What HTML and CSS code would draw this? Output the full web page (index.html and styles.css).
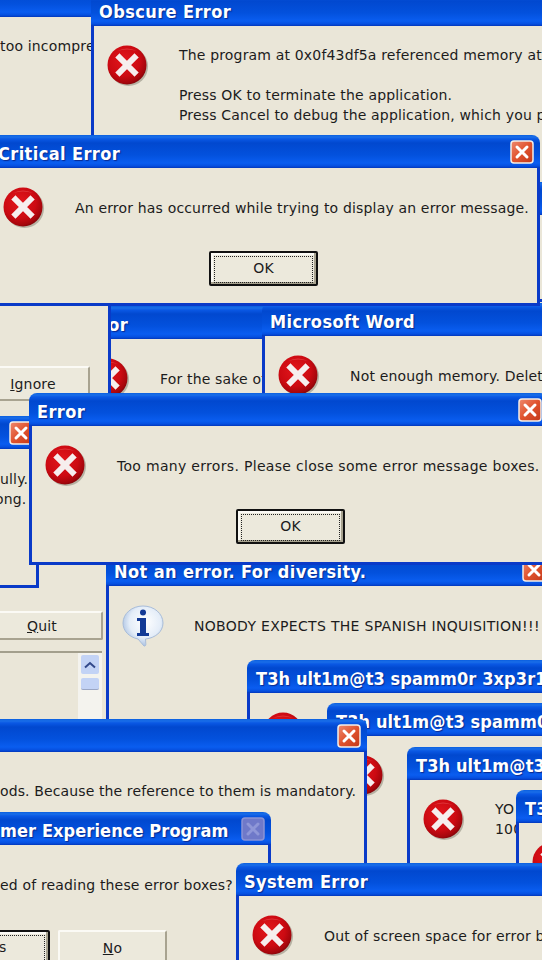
FILE: index.html
```html
<!DOCTYPE html>
<html lang="en">
<head>
    <meta charset="UTF-8">
    <meta name="viewport" content="width=device-width, initial-scale=1.0">
    <title>Too many errors</title>
    <link rel="stylesheet" href="styles.css">
</head>
<body>
    <svg class="sprites" aria-hidden="true">
        <defs>
            <radialGradient id="redBall" cx="42%" cy="38%" r="68%">
                <stop offset="0" stop-color="#e2161c"/>
                <stop offset="0.6" stop-color="#cc0a12"/>
                <stop offset="0.85" stop-color="#a5060c"/>
                <stop offset="1" stop-color="#6e0408"/>
            </radialGradient>
            <radialGradient id="infoBall" cx="55%" cy="40%" r="65%">
                <stop offset="0" stop-color="#ffffff"/>
                <stop offset="0.6" stop-color="#e4edf8"/>
                <stop offset="1" stop-color="#9db7dc"/>
            </radialGradient>
            <linearGradient id="closeRed" x1="0" y1="0" x2="1" y2="1">
                <stop offset="0" stop-color="#ee8a70"/>
                <stop offset="0.5" stop-color="#e0532e"/>
                <stop offset="1" stop-color="#c2381a"/>
            </linearGradient>
            <symbol id="icoError" viewBox="0 0 42 42">
                <circle cx="21.5" cy="21.5" r="19.5" fill="#8a8678" opacity="0.55"/>
                <circle cx="20" cy="20" r="19.5" fill="url(#redBall)"/>
                <path d="M10 6a18 14 0 0 1 20 0a24 16 0 0 0-20 0z" fill="#f0686a" opacity="0.45"/>
                <path d="M12.500 12.500l15 15M27.500 12.500l-15 15" stroke="#f6eeee" stroke-width="6" stroke-linecap="square" fill="none"/>
            </symbol>
            <symbol id="icoInfo" viewBox="0 0 42 42">
                <path d="M21 1C10 1 1 8.500 1 18c0 8 6 14 15 16l6 7c1.500 0.500 2-1 1.800-2.500l-0.300-4.500C33 33 41 27 41 18 41 8.500 32 1 21 1z" fill="url(#infoBall)" stroke="#a8bcd8" stroke-width="1"/>
                <circle cx="21" cy="7.500" r="3" fill="#123a96"/>
                <path d="M15 13h9v15h3v3H15v-3h3V16h-3z" fill="#123a96"/>
            </symbol>
            <symbol id="icoClose" viewBox="0 0 24 24">
                <rect x="1" y="1" width="22" height="22" rx="3" fill="url(#closeRed)" stroke="#f4efe9" stroke-width="1.500"/>
                <path d="M7 7l10 10M17 7L7 17" stroke="#fff" stroke-width="3" stroke-linecap="round" fill="none"/>
            </symbol>
            <symbol id="icoCloseOff" viewBox="0 0 24 24">
                <rect x="1" y="1" width="22" height="22" rx="3" fill="#6f79c9" stroke="#8b93d4" stroke-width="1.500"/>
                <path d="M7 7l10 10M17 7L7 17" stroke="#8f97d8" stroke-width="3" stroke-linecap="round" fill="none"/>
            </symbol>
        </defs>
    </svg>

    <div class="desktop">

        <div class="win win-topleft">
            <div class="titlebar"></div>
            <div class="body body-bare">
                <p class="msg">too incompre</p>
            </div>
        </div>

        <div class="win win-obscure">
            <div class="titlebar"><span class="caption">Obscure Error</span></div>
            <div class="body">
                <div class="row row-top">
                    <svg class="icon"><use href="#icoError"/></svg>
                    <div class="msg">
                        <p>The program at 0x0f43df5a referenced memory at</p>
                        <p>Press OK to terminate the application.<br>Press Cancel to debug the application, which you p</p>
                    </div>
                </div>
            </div>
        </div>

        <div class="win win-strip">
            <div class="titlebar"></div>
            <div class="body"></div>
        </div>

        <div class="win win-sake">
            <div class="titlebar"><span class="caption">Error</span></div>
            <div class="body">
                <div class="row">
                    <svg class="icon"><use href="#icoError"/></svg>
                    <p class="msg">For the sake of</p>
                </div>
            </div>
        </div>

        <div class="win win-word">
            <div class="titlebar"><span class="caption">Microsoft Word</span></div>
            <div class="body">
                <div class="row">
                    <svg class="icon"><use href="#icoError"/></svg>
                    <p class="msg">Not enough memory. Delet</p>
                </div>
            </div>
        </div>

        <div class="win win-ignore">
            <div class="titlebar"></div>
            <div class="body body-ignore">
                <button class="btn btn-ignore"><span><u>I</u>gnore</span></button>
            </div>
        </div>

        <div class="win win-critical">
            <div class="titlebar">
                <span class="caption">Critical Error</span>
                <svg class="close"><use href="#icoClose"/></svg>
            </div>
            <div class="body">
                <div class="row">
                    <svg class="icon"><use href="#icoError"/></svg>
                    <p class="msg">An error has occurred while trying to display an error message.</p>
                </div>
                <div class="buttons">
                    <button class="btn btn-focus"><span>OK</span></button>
                </div>
            </div>
        </div>

        <div class="win win-quit">
            <div class="titlebar"></div>
            <div class="body body-quit">
                <button class="btn btn-quit"><span><u>Q</u>uit</span></button>
                <div class="listbox">
                    <div class="scrollbar">
                        <div class="scroll-up">
                            <svg viewBox="0 0 12 8"><path d="M1 6.500L6 2l5 4.500" fill="none" stroke="#33498a" stroke-width="2"/></svg>
                        </div>
                        <div class="scroll-thumb"></div>
                    </div>
                </div>
            </div>
        </div>

        <div class="win win-fully">
            <div class="titlebar">
                <svg class="close"><use href="#icoClose"/></svg>
            </div>
            <div class="body body-bare body-fully">
                <p class="msg">ully.</p>
                <p class="msg msg-shift">ong.</p>
            </div>
        </div>

        <div class="win win-diversity">
            <div class="titlebar">
                <span class="caption">Not an error. For diversity.</span>
                <svg class="close"><use href="#icoClose"/></svg>
            </div>
            <div class="body">
                <div class="row">
                    <svg class="icon"><use href="#icoInfo"/></svg>
                    <p class="msg msg-caps">NOBODY EXPECTS THE SPANISH INQUISITION!!!</p>
                </div>
            </div>
        </div>

        <div class="win win-error">
            <div class="titlebar">
                <span class="caption">Error</span>
                <svg class="close"><use href="#icoClose"/></svg>
            </div>
            <div class="body">
                <div class="row">
                    <svg class="icon"><use href="#icoError"/></svg>
                    <p class="msg msg-caps">Too many errors. Please close some error message boxes.</p>
                </div>
                <div class="buttons">
                    <button class="btn btn-focus"><span>OK</span></button>
                </div>
            </div>
        </div>

        <div class="win win-spam win-spam1">
            <div class="titlebar"><span class="caption">T3h ult1m@t3 spamm0r 3xp3r1</span></div>
            <div class="body">
                <div class="row"><svg class="icon"><use href="#icoError"/></svg></div>
            </div>
        </div>

        <div class="win win-spam win-spam2">
            <div class="titlebar"><span class="caption">T3h ult1m@t3 spamm0</span></div>
            <div class="body">
                <div class="row"><svg class="icon"><use href="#icoError"/></svg></div>
            </div>
        </div>

        <div class="win win-spam win-spam3">
            <div class="titlebar"><span class="caption">T3h ult1m@t3</span></div>
            <div class="body">
                <div class="row row-top">
                    <svg class="icon"><use href="#icoError"/></svg>
                    <p class="msg">YO<br>100</p>
                </div>
            </div>
        </div>

        <div class="win win-spam win-spam4">
            <div class="titlebar"><span class="caption">T3</span></div>
            <div class="body">
                <div class="row"><svg class="icon"><use href="#icoError"/></svg></div>
            </div>
        </div>

        <div class="win win-mandatory">
            <div class="titlebar">
                <svg class="close"><use href="#icoClose"/></svg>
            </div>
            <div class="body body-bare body-mandatory">
                <p class="msg msg-tight">ods. Because the reference to them is mandatory.</p>
            </div>
        </div>

        <div class="win win-customer">
            <div class="titlebar">
                <span class="caption caption-tight">mer Experience Program</span>
                <svg class="close"><use href="#icoCloseOff"/></svg>
            </div>
            <div class="body body-bare body-customer">
                <p class="msg">ed of reading these error boxes?</p>
                <div class="buttons buttons-left">
                    <button class="btn btn-focus btn-yes"><span>Yes</span></button>
                    <button class="btn"><span><u>N</u>o</span></button>
                </div>
            </div>
        </div>

        <div class="win win-system">
            <div class="titlebar"><span class="caption">System Error</span></div>
            <div class="body">
                <div class="row">
                    <svg class="icon"><use href="#icoError"/></svg>
                    <p class="msg">Out of screen space for error b</p>
                </div>
            </div>
        </div>

    </div>
</body>
</html>
```

FILE: styles.css
```css
html, body {
    margin: 0;
    padding: 0;
}

body {
    font-family: "DejaVu Sans", sans-serif;
    font-size: 14px;
    line-height: 20px;
    letter-spacing: 0.17px;
    color: #1c1c1c;
    background: #eae6d8;
}

.sprites {
    position: absolute;
    width: 0;
    height: 0;
}

.desktop {
    position: relative;
    width: 542px;
    height: 960px;
    overflow: hidden;
    background: #eae6d8;
}

/* windows lie on a free canvas, so each has its own spot */
.win {
    position: absolute;
    display: flex;
    flex-direction: column;
    border-radius: 8px 8px 0 0;
    overflow: hidden;
}

.titlebar {
    flex: none;
    display: flex;
    align-items: center;
    height: 33px;
    padding: 0 6px 0 8px;
    background: linear-gradient(to bottom, #0a5fe0 0, #1a6ee8 2px, #0a58e4 4px, #0148cf 8px, #0351dd 20px, #0a5df0 28px, #0650e0 31px, #0337bb 33px);
}

.caption {
    font-family: "DejaVu Sans Condensed", "DejaVu Sans", sans-serif;
    font-weight: bold;
    font-size: 18px;
    letter-spacing: 0.4px;
    color: #fff;
    white-space: nowrap;
    padding-top: 4px;
    text-shadow: 1px 1px 1px #0a2a90;
}

.caption-tight,
.win-spam .caption {
    letter-spacing: 0.1px;
}

.win-spam .caption {
    margin-left: 1px;
}

.win-critical .caption {
    margin-left: 3px;
}

.close {
    flex: none;
    width: 24px;
    height: 24px;
    margin-left: auto;
}

.body {
    flex: 1;
    min-height: 0;
    padding: 19px 13px;
    background: #eae6d8;
    border: solid #0a3ac8;
    border-width: 0 3px 3px;
}

.body-bare {
    padding-left: 5px;
    padding-right: 0;
}

.row {
    display: flex;
    align-items: center;
    gap: 32px;
}

.row-top {
    align-items: flex-start;
}

.icon {
    flex: none;
    width: 42px;
    height: 42px;
    margin-right: -2px;
}

.msg {
    margin: 0;
    white-space: nowrap;
}

.msg p {
    margin: 0 0 20px;
}

.msg-tight {
    letter-spacing: 0.12px;
}

.msg-caps {
    letter-spacing: 0.31px;
}

.msg-shift {
    margin-left: -5px;
}

.buttons {
    display: flex;
    justify-content: center;
    margin-top: 22px;
}

.buttons-left {
    justify-content: flex-start;
    gap: 8px;
    margin-top: 35px;
}

.btn {
    flex: none;
    width: 109px;
    height: 35px;
    padding: 0;
    font: inherit;
    letter-spacing: inherit;
    color: inherit;
    background: #ece9dc;
    border: solid;
    border-width: 2px;
    border-color: #fbfaf5 #a8a390 #a8a390 #fbfaf5;
    border-radius: 2px;
}

.btn-focus {
    border-color: #111;
    box-shadow: inset -2px -2px 0 #a8a390, inset 2px 2px 0 #fbfaf5;
    padding: 3px;
}

.btn-focus span {
    display: block;
    height: 100%;
    line-height: 23px;
    border: 1px dotted #222;
}

/* windows, back to front */
.win-topleft {
    left: -20px;
    top: -16px;
    width: 150px;
    height: 160px;
}

.win-topleft .msg {
    margin-left: 12px;
}

.win-obscure {
    left: 91px;
    top: -7px;
    width: 600px;
    height: 193px;
}

.win-strip {
    left: 500px;
    top: 182px;
    width: 100px;
    height: 120px;
}

.win-critical {
    left: -13px;
    top: 135px;
    width: 553px;
    height: 171px;
}

.win-sake {
    left: 72px;
    top: 306px;
    width: 300px;
    height: 200px;
}

.win-word {
    left: 262px;
    top: 303px;
    width: 400px;
    height: 130px;
}

.win-ignore {
    left: -60px;
    top: 250px;
    width: 171px;
    height: 250px;
}

.body-ignore {
    padding-top: 83px;
    padding-right: 18px;
    display: flex;
    justify-content: flex-end;
    align-items: flex-start;
}

.btn-ignore {
    width: 114px;
}

.win-quit {
    left: -30px;
    top: 530px;
    width: 150px;
    height: 300px;
}

.body-quit {
    padding: 48px 14px 0 0;
    display: flex;
    flex-direction: column;
    align-items: flex-end;
}

.btn-quit {
    width: 122px;
    height: 29px;
}

.listbox {
    width: 133px;
    height: 100px;
    margin-top: 11px;
    margin-right: 1px;
    border-top: 2px solid #a39f8d;
    display: flex;
    justify-content: flex-end;
}

.scrollbar {
    width: 24px;
    padding: 2px 3px;
    box-sizing: border-box;
    background: #f4f3ee;
    display: flex;
    flex-direction: column;
    gap: 4px;
}

.scroll-up {
    height: 19px;
    background: #c3d3f5;
    border-radius: 2px;
    display: flex;
    align-items: center;
    justify-content: center;
}

.scroll-up svg {
    width: 12px;
    height: 8px;
}

.scroll-thumb {
    height: 11px;
    background: #c3d3f5;
    border-radius: 2px;
    border-bottom: 1px solid #9aa6c4;
}

.win-fully {
    left: -8px;
    top: 416px;
    width: 47px;
    height: 172px;
}

.body-fully {
    padding-top: 20px;
}

.win-diversity {
    left: 106px;
    top: 553px;
    width: 446px;
    height: 300px;
}

.win-error {
    left: 29px;
    top: 393px;
    width: 519px;
    height: 172px;
}

.win-error .btn {
    margin-left: 4px;
}

.win-spam {
    width: 400px;
    height: 300px;
}

.win-spam1 {
    left: 247px;
    top: 660px;
}

.win-spam2 {
    left: 327px;
    top: 703px;
}

.win-spam3 {
    left: 407px;
    top: 747px;
}

.win-spam4 {
    left: 516px;
    top: 790px;
}

.win-mandatory {
    left: -8px;
    top: 719px;
    width: 375px;
    height: 300px;
}

.body-mandatory {
    padding-top: 29px;
}

.win-customer {
    left: -8px;
    top: 812px;
    width: 279px;
    height: 300px;
}

.body-customer {
    padding-top: 30px;
}

.btn-yes {
    width: 110px;
    margin-left: -60px;
}

.win-system {
    left: 236px;
    top: 863px;
    width: 400px;
    height: 200px;
}
```
